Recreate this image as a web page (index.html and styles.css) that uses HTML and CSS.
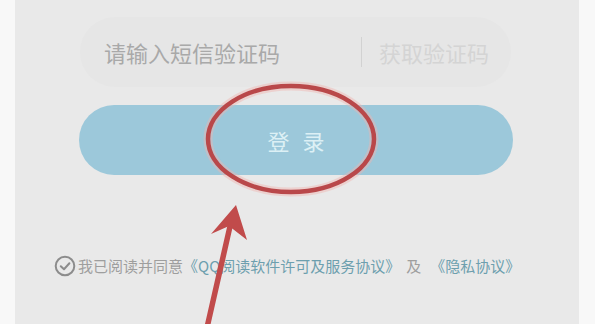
FILE: index.html
```html
<!DOCTYPE html>
<html lang="zh-CN">
<head>
<meta charset="utf-8">
<link rel="stylesheet" href="styles.css">
</head>
<body>
<div class="panel">
  <div class="form">
    <div class="field">
      <span class="placeholder">请输入短信验证码</span>
      <span class="divider"></span>
      <span class="getcode">获取验证码</span>
    </div>
    <div class="login">登录</div>
  </div>
  <div class="consent">
    <svg class="check" width="22" height="22" viewBox="0 0 22 22">
      <circle cx="11" cy="11" r="9.3" fill="none" stroke="#8c8c8c" stroke-width="2"/>
      <path d="M6.8 11.2 L10 14.2 L15.4 8.3" fill="none" stroke="#8c8c8c" stroke-width="2" stroke-linecap="round" stroke-linejoin="round"/>
    </svg>
    <span class="gray">我已阅读并同意</span><span class="link">《QQ阅读软件许可及服务协议》</span><span class="gray and">及</span><span class="link">《隐私协议》</span>
  </div>
  <svg class="annot" width="564" height="324" viewBox="15 0 564 324">
    <ellipse cx="291" cy="139" rx="83" ry="53" fill="none" stroke="#f0b4b0" stroke-width="9" opacity="0.45"/>
    <ellipse cx="291" cy="139" rx="83" ry="53" fill="none" stroke="#b9484a" stroke-width="4.5"/>
    <line x1="206" y1="332" x2="231" y2="222" stroke="#c14b4b" stroke-width="5.5" stroke-linecap="round"/>
    <polygon points="236,205 211,234 229,226 247,240" fill="#c14b4b"/>
  </svg>
</div>
</body>
</html>
```

FILE: styles.css
```css
html, body {
  margin: 0;
  padding: 0;
  background: #f8f8f8;
}
body {
  width: 595px;
  height: 324px;
  overflow: hidden;
  font-family: "Noto Sans CJK SC", "Noto Sans", sans-serif;
}
.panel {
  position: relative;
  margin-left: 15px;
  width: 564px;
  height: 324px;
  background: #e9e9e9;
  padding-top: 17px;
  box-sizing: border-box;
}
.form {
  margin-left: 64px;
  width: 434px;
  display: flex;
  flex-direction: column;
  gap: 18px;
}
.field {
  height: 70px;
  border-radius: 35px;
  background: #e6e6e6;
  display: flex;
  align-items: center;
  padding: 0 22px 0 24px;
  margin: 0 2px 0 1px;
}
.placeholder {
  flex: 1;
  font-size: 22px;
  color: #a9a9a9;
  line-height: 30px;
}
.divider {
  width: 1px;
  height: 30px;
  background: #d2d2d2;
  margin-right: 17px;
}
.getcode {
  font-size: 22px;
  color: #d4d4d4;
  line-height: 30px;
}
.login {
  height: 70px;
  border-radius: 35px;
  background: #9cc8da;
  color: #dcf0f5;
  font-size: 22px;
  letter-spacing: 13px;
  text-indent: 13px;
  display: flex;
  align-items: center;
  justify-content: center;
}
.consent {
  margin-top: 80px;
  margin-left: 39px;
  display: flex;
  align-items: center;
  height: 22px;
  font-size: 15px;
  line-height: 22px;
}
.check {
  margin-right: 2px;
  flex: none;
}
.gray {
  color: #9e9e9e;
}
.and {
  margin: 0 9px 0 6px;
}
.link {
  color: #6d9fae;
}
.annot {
  position: absolute;
  left: 0;
  top: 0;
  pointer-events: none;
}
```
